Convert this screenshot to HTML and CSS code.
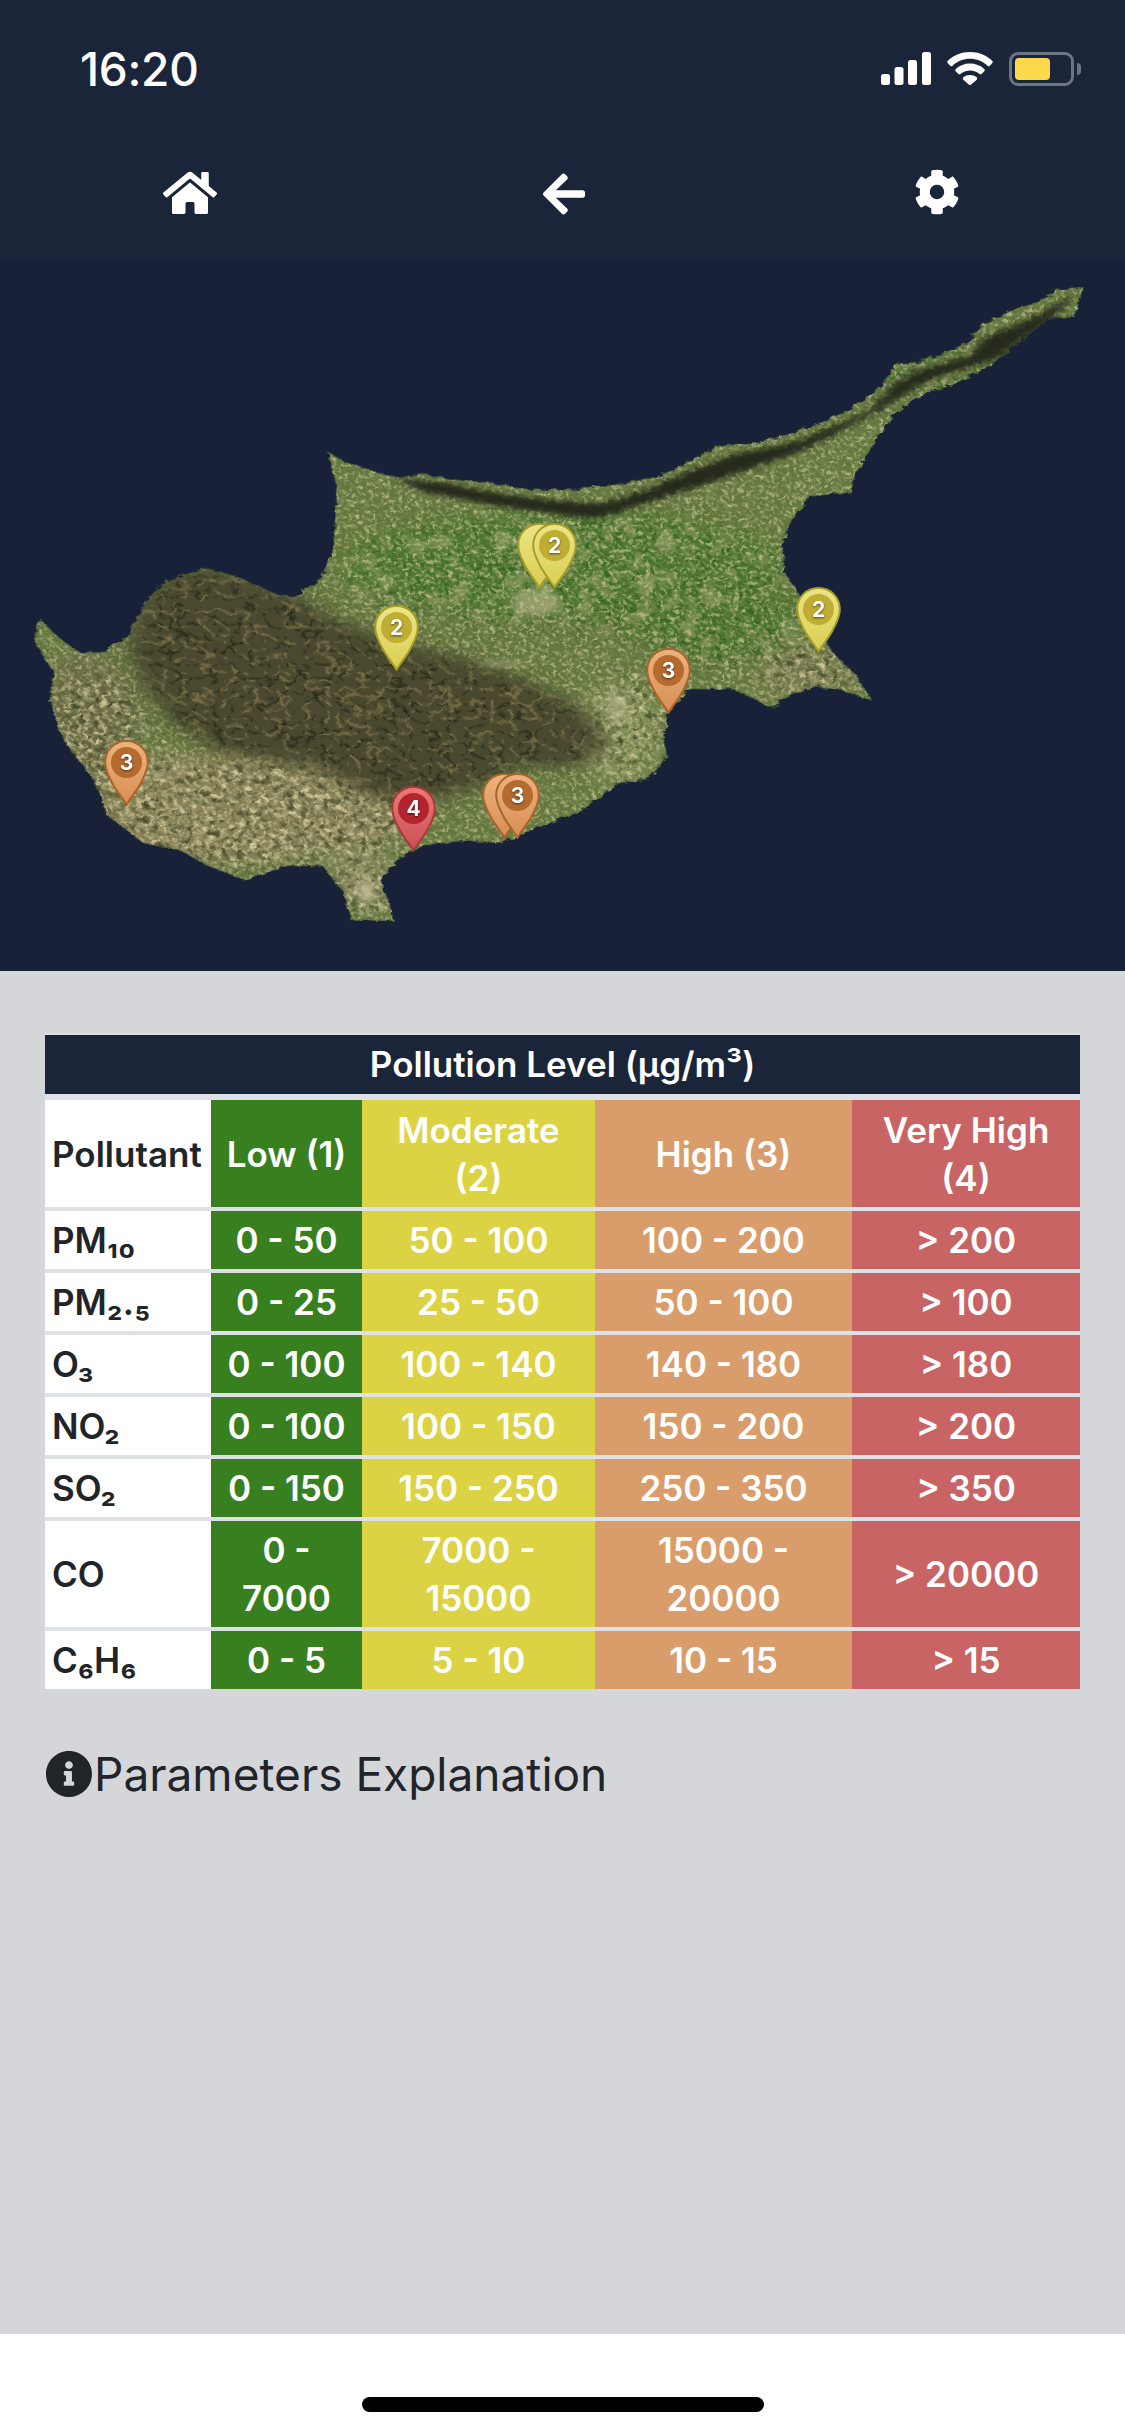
FILE: index.html
```html
<!DOCTYPE html>
<html lang="en">
<head>
<meta charset="utf-8">
<title>Pollution Level</title>
<link rel="stylesheet" href="styles.css">
</head>
<body>
<svg class="defs" width="0" height="0" aria-hidden="true">
  <defs>
    <linearGradient id="gy" x1="0" y1="0" x2="0" y2="1"><stop offset="0" stop-color="#ece586"/><stop offset="1" stop-color="#d8cf52"/></linearGradient>
    <linearGradient id="go" x1="0" y1="0" x2="0" y2="1"><stop offset="0" stop-color="#eeb27c"/><stop offset="1" stop-color="#d68f55"/></linearGradient>
    <linearGradient id="gr" x1="0" y1="0" x2="0" y2="1"><stop offset="0" stop-color="#ea7a78"/><stop offset="1" stop-color="#c94f55"/></linearGradient>
    <path id="pinshape" d="M22.500 1C10.500 1 1.200 10.200 1.200 22.400c0 7.400 3 12.500 6.600 19.800C12 50.600 18.600 58 22.500 64.500 26.400 58 33 50.600 37.200 42.200 40.800 34.900 43.800 29.800 43.800 22.400 43.800 10.200 34.500 1 22.500 1Z"/>
  </defs>
</svg>
<div class="app">
  <header class="top">
    <div class="status">
      <span class="time">16:20</span>
      <div class="status-icons">
        <svg class="signal" viewBox="0 0 50 33"><rect x="0" y="22" width="9" height="11" rx="2.500"/><rect x="13.500" y="15" width="9" height="18" rx="2.500"/><rect x="27" y="8" width="9" height="25" rx="2.500"/><rect x="41" y="0" width="9" height="33" rx="2.500"/></svg>
        <svg class="wifi" viewBox="0 0 46 33"><path d="M23 0C14.500 0 6.700 3.300.8 8.800c-.7.700-.7 1.700 0 2.400l2.400 2.500c.7.700 1.700.7 2.400 0C10.300 9.400 16.400 6.800 23 6.800s12.700 2.600 17.400 6.900c.7.700 1.700.7 2.400 0l2.400-2.500c.7-.7.700-1.700 0-2.400C39.300 3.300 31.500 0 23 0Z"/><path d="M23 11.500c-5.400 0-10.400 2-14.200 5.400-.7.700-.8 1.700-.1 2.400l2.500 2.500c.6.700 1.600.7 2.300.1C16.100 19.800 19.400 18.400 23 18.400s6.900 1.400 9.500 3.500c.7.600 1.700.600 2.300-.1l2.500-2.500c.7-.7.600-1.700-.1-2.400C33.400 13.500 28.400 11.500 23 11.500Z"/><path d="M23 23c-2.500 0-4.800.9-6.600 2.300-.7.600-.8 1.700-.1 2.400l5.500 4.800c.7.700 1.700.7 2.400 0l5.500-4.800c.7-.7.600-1.800-.1-2.400C27.800 23.900 25.500 23 23 23Z"/></svg>
        <div class="battery"><div class="battery-fill"></div></div>
      </div>
    </div>
    <nav class="nav">
      <svg class="ico ico-home" viewBox="0 0 576 512"><path d="M280.370 148.260L96 300.110V464a16 16 0 0 0 16 16l112.060-.29a16 16 0 0 0 15.920-16V368a16 16 0 0 1 16-16h64a16 16 0 0 1 16 16v95.640a16 16 0 0 0 16 16.050L464 480a16 16 0 0 0 16-16V300L295.670 148.260a12.190 12.190 0 0 0-15.300 0zM571.600 251.470L488 182.560V44.050a12 12 0 0 0-12-12h-56a12 12 0 0 0-12 12v72.610L318.470 43a48 48 0 0 0-61 0L4.340 251.470a12 12 0 0 0-1.600 16.900l25.500 31A12 12 0 0 0 45.150 301l235.220-193.740a12.190 12.190 0 0 1 15.300 0L530.900 301a12 12 0 0 0 16.900-1.600l25.500-31a12 12 0 0 0-1.700-16.930z"/></svg>
      <svg class="ico ico-back" viewBox="0 0 448 512"><path d="M257.500 445.100l-22.200 22.200c-9.400 9.400-24.600 9.400-33.900 0L7 273c-9.400-9.400-9.400-24.600 0-33.900L201.400 44.700c9.400-9.400 24.600-9.400 33.900 0l22.200 22.200c9.500 9.500 9.300 25-.4 34.300L136.600 216H424c13.300 0 24 10.700 24 24v32c0 13.300-10.700 24-24 24H136.600l120.500 114.800c9.800 9.300 10 24.800.4 34.300z"/></svg>
      <svg class="ico ico-gear" viewBox="0 0 512 512"><path d="M487.400 315.700l-42.600-24.600c4.300-23.200 4.300-47 0-70.200l42.600-24.600c4.900-2.800 7.100-8.600 5.500-14-11.100-35.600-30-67.800-54.700-94.600-3.800-4.100-10-5.100-14.800-2.300L380.800 110c-17.900-15.400-38.500-27.300-60.800-35.100V25.800c0-5.600-3.900-10.500-9.400-11.700-36.700-8.200-74.300-7.800-109.200 0-5.500 1.200-9.400 6.100-9.400 11.700V75c-22.200 7.900-42.800 19.800-60.800 35.100L88.700 85.500c-4.900-2.800-11-1.900-14.800 2.300-24.700 26.700-43.600 58.900-54.700 94.600-1.700 5.400.6 11.200 5.500 14L67.300 221c-4.300 23.200-4.300 47 0 70.200l-42.600 24.600c-4.900 2.800-7.100 8.600-5.500 14 11.100 35.600 30 67.800 54.700 94.600 3.800 4.100 10 5.100 14.800 2.300l42.600-24.600c17.900 15.400 38.500 27.300 60.800 35.100v49.200c0 5.600 3.900 10.500 9.400 11.700 36.700 8.200 74.300 7.800 109.200 0 5.500-1.200 9.400-6.100 9.400-11.700v-49.200c22.200-7.900 42.800-19.800 60.800-35.100l42.600 24.600c4.900 2.800 11 1.900 14.800-2.300 24.700-26.700 43.600-58.900 54.700-94.600 1.500-5.500-.7-11.300-5.600-14.100zM256 336c-44.100 0-80-35.900-80-80s35.900-80 80-80 80 35.900 80 80-35.900 80-80 80z"/></svg>
    </nav>
    <div class="map">
      <svg class="land" viewBox="0 0 1568 1549" preserveAspectRatio="none">
        <defs>
          <path id="isle" d="M457 418 480 440 520 460 555 475 585 465 625 478 680 485 740 500 800 500 860 490 920 470 960 440 1000 405 1050 400 1110 375 1160 345 1200 310 1230 270 1250 225 1275 225 1310 205 1350 180 1365 145 1410 110 1450 90 1475 65 1510 58 1498 120 1460 130 1410 190 1380 230 1330 270 1290 290 1250 330 1225 380 1195 460 1185 505 1130 515 1105 560 1090 620 1092 680 1115 730 1140 800 1160 855 1190 900 1215 960 1170 935 1130 930 1095 950 1075 978 1050 955 1020 935 960 935 930 985 925 1050 930 1080 905 1130 860 1140 810 1200 760 1230 700 1270 650 1265 590 1275 550 1310 530 1350 550 1440 490 1440 480 1380 450 1320 400 1320 340 1350 290 1320 250 1285 200 1270 150 1210 130 1130 90 1050 70 965 75 900 48 830 55 782 80 820 110 855 145 855 180 815 205 740 230 700 285 672 330 690 380 725 410 735 450 690 465 620 470 500Z"/>
          <path id="troodos" d="M185 850 195 760 230 695 290 672 400 730 480 800 560 840 650 875 730 920 815 990 840 1060 800 1100 720 1095 680 1135 620 1165 520 1165 470 1115 390 1085 310 1065 250 1010 210 935Z"/>
          <clipPath id="isleclip"><use href="#isle"/></clipPath>
          <filter id="edge" x="-5%" y="-5%" width="110%" height="110%" color-interpolation-filters="sRGB">
            <feTurbulence type="fractalNoise" baseFrequency="0.09" numOctaves="3" seed="4" result="n"/>
            <feDisplacementMap in="SourceGraphic" in2="n" scale="10"/>
          </filter>
          <filter id="speckle" x="0" y="0" width="100%" height="100%" color-interpolation-filters="sRGB">
            <feTurbulence type="fractalNoise" baseFrequency="0.2 0.13" numOctaves="3" seed="11"/>
            <feColorMatrix type="matrix" values="0 0 0 0 .80  0 0 0 0 .79  0 0 0 0 .60  3 3 0 0 -2.950"/>
          </filter>
          <filter id="fields" x="0" y="0" width="100%" height="100%" color-interpolation-filters="sRGB">
            <feTurbulence type="fractalNoise" baseFrequency="0.035 0.025" numOctaves="3" seed="57"/>
            <feColorMatrix type="matrix" values="0 0 0 0 .66  0 0 0 0 .66  0 0 0 0 .46  3.500 3.500 0 0 -3.500"/>
          </filter>
          <filter id="bright" x="0" y="0" width="100%" height="100%" color-interpolation-filters="sRGB">
            <feTurbulence type="fractalNoise" baseFrequency="0.12 0.08" numOctaves="4" seed="31"/>
            <feColorMatrix type="matrix" values="0 0 0 0 .88  0 0 0 0 .84  0 0 0 0 .66  2.700 2.700 0 0 -2.750"/>
          </filter>
          <filter id="darks" x="0" y="0" width="100%" height="100%" color-interpolation-filters="sRGB">
            <feTurbulence type="fractalNoise" baseFrequency="0.1 0.07" numOctaves="4" seed="42"/>
            <feColorMatrix type="matrix" values="0 0 0 0 .18  0 0 0 0 .22  0 0 0 0 .10  0 2.700 2.700 0 -2.700"/>
          </filter>
          <filter id="greens" x="0" y="0" width="100%" height="100%" color-interpolation-filters="sRGB">
            <feTurbulence type="fractalNoise" baseFrequency="0.14 0.1" numOctaves="3" seed="23"/>
            <feColorMatrix type="matrix" values="0 0 0 0 .20  0 0 0 0 .38  0 0 0 0 .13  3.500 3.500 0 0 -3.400"/>
          </filter>
          <filter id="ridgelines" x="0" y="0" width="100%" height="100%" color-interpolation-filters="sRGB">
            <feTurbulence type="turbulence" baseFrequency="0.035 0.03" numOctaves="2" seed="7"/>
            <feColorMatrix type="matrix" values="0 0 0 0 .60  0 0 0 0 .53  0 0 0 0 .35  -7 0 0 0 1"/>
          </filter>
          <filter id="ridgedark" x="0" y="0" width="100%" height="100%" color-interpolation-filters="sRGB">
            <feTurbulence type="turbulence" baseFrequency="0.04 0.034" numOctaves="2" seed="19"/>
            <feColorMatrix type="matrix" values="0 0 0 0 .13  0 0 0 0 .14  0 0 0 0 .08  -8 0 0 0 1.100"/>
          </filter>
          <filter id="soft" x="-30%" y="-30%" width="160%" height="160%"><feGaussianBlur stdDeviation="20"/></filter>
          <filter id="feather" x="-30%" y="-30%" width="160%" height="160%"><feGaussianBlur stdDeviation="16"/></filter>
          <filter id="softer" x="-30%" y="-30%" width="160%" height="160%"><feGaussianBlur stdDeviation="6"/></filter>
          <mask id="southmask" maskUnits="userSpaceOnUse" x="0" y="0" width="1568" height="1549">
            <g filter="url(#soft)" fill="#fff">
              <ellipse cx="330" cy="1200" rx="280" ry="120"/>
              <ellipse cx="130" cy="1030" rx="70" ry="130"/>
              <ellipse cx="870" cy="1010" rx="60" ry="110"/>
              <ellipse cx="1130" cy="890" rx="70" ry="60"/>
              <ellipse cx="510" cy="1370" rx="40" ry="70"/>
            </g>
          </mask>
          <mask id="centermask" maskUnits="userSpaceOnUse" x="0" y="0" width="1568" height="1549">
            <g filter="url(#soft)" fill="#fff">
              <ellipse cx="790" cy="680" rx="310" ry="130"/>
              <ellipse cx="1000" cy="800" rx="120" ry="90"/>
              <ellipse cx="1300" cy="240" rx="220" ry="60"/>
            </g>
          </mask>
          <mask id="troodosmask" maskUnits="userSpaceOnUse" x="0" y="0" width="1568" height="1549">
            <use href="#troodos" fill="#fff" filter="url(#feather)"/>
          </mask>
        </defs>
        <g filter="url(#edge)">
          <g clip-path="url(#isleclip)">
            <rect width="1568" height="1549" fill="#63773f"/>
            <g filter="url(#soft)">
              <ellipse cx="330" cy="1190" rx="260" ry="120" fill="#857f54"/>
              <ellipse cx="120" cy="1000" rx="70" ry="150" fill="#6b6b45"/>
              <ellipse cx="860" cy="1030" rx="60" ry="110" fill="#7f8c54"/>
              <ellipse cx="1120" cy="890" rx="70" ry="60" fill="#75784c"/>
              <ellipse cx="510" cy="1350" rx="50" ry="60" fill="#85845a"/>
              <ellipse cx="780" cy="660" rx="300" ry="110" fill="#4f7733"/>
              <ellipse cx="1000" cy="780" rx="120" ry="90" fill="#4f7433"/>
            </g>
            <rect width="1568" height="1549" filter="url(#greens)" mask="url(#centermask)" opacity=".9"/>
            <rect width="1568" height="1549" filter="url(#fields)" mask="url(#centermask)" opacity=".5"/>
            <rect width="1568" height="1549" filter="url(#speckle)" opacity=".75"/>
            <g mask="url(#southmask)">
              <rect width="1568" height="1549" filter="url(#bright)" opacity=".9"/>
              <rect width="1568" height="1549" filter="url(#darks)" opacity=".7"/>
            </g>
            <g filter="url(#soft)"><use href="#troodos" fill="#3f3e28" opacity=".7"/></g>
            <g mask="url(#troodosmask)">
              <rect width="1568" height="1549" fill="#4a4930" opacity=".92"/>
              <rect width="1568" height="1549" filter="url(#ridgedark)" opacity=".9"/>
              <rect width="1568" height="1549" filter="url(#ridgelines)" opacity=".75"/>
            </g>
            <g filter="url(#softer)">
              <path d="M1500 70 1440 125 1370 170 1350 210 1280 240 1250 265 1210 330 1110 395 1020 425 960 460 900 500 840 530 780 525 700 510 620 485 550 475 590 505 700 538 830 565 900 530 1000 480 1120 415 1230 325 1290 265 1390 215 1470 125Z" fill="#282c1a"/>
            </g>
            <g filter="url(#softer)" fill="#c2bc94">
              <ellipse cx="745" cy="745" rx="34" ry="30" opacity=".55"/>
              <ellipse cx="860" cy="975" rx="16" ry="40" opacity=".5"/>
              <ellipse cx="510" cy="1375" rx="11" ry="20" opacity=".95"/>
              <ellipse cx="700" cy="880" rx="40" ry="6" opacity=".45"/>
            </g>
          </g>
        </g>
      </svg>
      <div class="pin pin-y p1"><svg viewBox="0 0 45 66"><use href="#pinshape" fill="url(#gy)" stroke="#a89c28" stroke-width="2"/></svg></div>
      <div class="pin pin-y p2"><svg viewBox="0 0 45 66"><use href="#pinshape" fill="url(#gy)" stroke="#a89c28" stroke-width="2"/><circle cx="22.500" cy="22.500" r="15.500" fill="#bfae33"/><text x="22.500" y="30">2</text></svg></div>
      <div class="pin pin-y p3"><svg viewBox="0 0 45 66"><use href="#pinshape" fill="url(#gy)" stroke="#a89c28" stroke-width="2"/><circle cx="22.500" cy="22.500" r="15.500" fill="#bfae33"/><text x="22.500" y="30">2</text></svg></div>
      <div class="pin pin-y p4"><svg viewBox="0 0 45 66"><use href="#pinshape" fill="url(#gy)" stroke="#a89c28" stroke-width="2"/><circle cx="22.500" cy="22.500" r="15.500" fill="#bfae33"/><text x="22.500" y="30">2</text></svg></div>
      <div class="pin pin-o p5"><svg viewBox="0 0 45 66"><use href="#pinshape" fill="url(#go)" stroke="#a8642c" stroke-width="2"/><circle cx="22.500" cy="22.500" r="15.500" fill="#b56b2e"/><text x="22.500" y="30">3</text></svg></div>
      <div class="pin pin-o p6"><svg viewBox="0 0 45 66"><use href="#pinshape" fill="url(#go)" stroke="#a8642c" stroke-width="2"/><circle cx="22.500" cy="22.500" r="15.500" fill="#b56b2e"/><text x="22.500" y="30">3</text></svg></div>
      <div class="pin pin-o p7"><svg viewBox="0 0 45 66"><use href="#pinshape" fill="url(#go)" stroke="#a8642c" stroke-width="2"/></svg></div>
      <div class="pin pin-o p8"><svg viewBox="0 0 45 66"><use href="#pinshape" fill="url(#go)" stroke="#a8642c" stroke-width="2"/><circle cx="22.500" cy="22.500" r="15.500" fill="#b56b2e"/><text x="22.500" y="30">3</text></svg></div>
      <div class="pin pin-r p9"><svg viewBox="0 0 45 66"><use href="#pinshape" fill="url(#gr)" stroke="#a83a3a" stroke-width="2"/><circle cx="22.500" cy="22.500" r="15.500" fill="#b3242c"/><text x="22.500" y="30">4</text></svg></div>
    </div>
  </header>
  <main class="content">
    <table class="levels">
      <colgroup><col class="c1"><col class="c2"><col class="c3"><col class="c4"><col class="c5"></colgroup>
      <thead>
        <tr class="title"><th colspan="5">Pollution Level (µg/m³)</th></tr>
        <tr class="heads"><th class="name">Pollutant</th><th class="low">Low (1)</th><th class="mod">Moderate (2)</th><th class="high">High (3)</th><th class="vhigh">Very High (4)</th></tr>
      </thead>
      <tbody>
        <tr><td class="name">PM₁₀</td><td class="low">0 - 50</td><td class="mod">50 - 100</td><td class="high">100 - 200</td><td class="vhigh">&gt; 200</td></tr>
        <tr><td class="name">PM₂.₅</td><td class="low">0 - 25</td><td class="mod">25 - 50</td><td class="high">50 - 100</td><td class="vhigh">&gt; 100</td></tr>
        <tr><td class="name">O₃</td><td class="low">0 - 100</td><td class="mod">100 - 140</td><td class="high">140 - 180</td><td class="vhigh">&gt; 180</td></tr>
        <tr><td class="name">NO₂</td><td class="low">0 - 100</td><td class="mod">100 - 150</td><td class="high">150 - 200</td><td class="vhigh">&gt; 200</td></tr>
        <tr><td class="name">SO₂</td><td class="low">0 - 150</td><td class="mod">150 - 250</td><td class="high">250 - 350</td><td class="vhigh">&gt; 350</td></tr>
        <tr><td class="name">CO</td><td class="low">0 - 7000</td><td class="mod">7000 - 15000</td><td class="high">15000 - 20000</td><td class="vhigh">&gt; 20000</td></tr>
        <tr><td class="name">C₆H₆</td><td class="low">0 - 5</td><td class="mod">5 - 10</td><td class="high">10 - 15</td><td class="vhigh">&gt; 15</td></tr>
      </tbody>
    </table>
    <div class="explain">
      <svg class="info" viewBox="8 8 496 496"><path d="M256 8C119.043 8 8 119.083 8 256c0 136.997 111.043 248 248 248s248-111.003 248-248C504 119.083 392.957 8 256 8zm0 110c23.196 0 42 18.804 42 42s-18.804 42-42 42-42-18.804-42-42 18.804-42 42-42zm56 254c0 6.627-5.373 12-12 12h-88c-6.627 0-12-5.373-12-12v-24c0-6.627 5.373-12 12-12h12v-64h-12c-6.627 0-12-5.373-12-12v-24c0-6.627 5.373-12 12-12h64c6.627 0 12 5.373 12 12v100h12c6.627 0 12 5.373 12 12v24z"/></svg>
      <span>Parameters Explanation</span>
    </div>
  </main>
  <footer class="bottom"><div class="indicator"></div></footer>
</div>
</body>
</html>
```
FILE: styles.css
```css
* { box-sizing: border-box; }
html, body { margin: 0; padding: 0; }
body { width: 1125px; height: 2436px; overflow: hidden; font-family: Inter, "Noto Sans", sans-serif; background: #d5d6da; color: #212529; }
.defs { position: absolute; }
.app { display: flex; flex-direction: column; height: 2436px; }

.top { background: #1b2539; height: 971px; display: flex; flex-direction: column; flex: none; }
.status { height: 132px; display: flex; justify-content: space-between; align-items: flex-start; padding: 45px 44px 0 80px; }
.time { color: #fff; font-size: 46px; font-weight: 500; line-height: 48px; letter-spacing: -0.3px; }
.status-icons { display: flex; align-items: flex-start; gap: 16px; padding-top: 7px; }
.signal { width: 50px; height: 33px; fill: #fff; }
.wifi { width: 46px; height: 33px; fill: #fff; }
.battery { position: relative; width: 65px; height: 34px; margin-right: 7px; border: 3px solid #6d7380; border-radius: 9px; padding: 3px; }
.battery::after { content: ""; position: absolute; left: 65px; top: 8px; width: 4px; height: 12px; background: #6d7380; border-radius: 0 4px 4px 0; }
.battery-fill { width: 35px; height: 22px; background: #fcd94a; border-radius: 4px; }

.nav { height: 128px; padding: 37px 165px 0 163px; display: flex; justify-content: space-between; align-items: flex-start; }
.ico { fill: #fff; display: block; }
.ico-home { width: 54px; height: 48px; }
.ico-back { width: 42px; height: 48px; margin-top: 1px; margin-right: 3px; }
.ico-gear { width: 46px; height: 46px; }

.map { position: relative; flex: 1; background: #182138; overflow: hidden; }
.land { display: block; width: 1125px; height: 711px; }
.pin { position: absolute; width: 45px; height: 66px; }
.pin svg { display: block; width: 45px; height: 66px; overflow: visible; }
.pin text { fill: #fff; font-family: Inter, sans-serif; font-size: 21px; font-weight: 700; text-anchor: middle; filter: drop-shadow(0 1px 1px rgba(0, 0, 0, .55)); }
.p1 { left: 517px; top: 263px; }
.p2 { left: 532px; top: 263px; }
.p3 { left: 374px; top: 345px; }
.p4 { left: 796px; top: 327px; }
.p5 { left: 646px; top: 388px; }
.p6 { left: 104px; top: 480px; }
.p7 { left: 482px; top: 513px; }
.p8 { left: 495px; top: 513px; }
.p9 { left: 391px; top: 526px; }

.content { flex: 1; padding: 62px 45px 0; }
.levels { width: 1035px; table-layout: fixed; border-collapse: collapse; font-size: 35px; line-height: 48px; font-weight: 600; color: #fff; text-align: center; }
.c1 { width: 166px; }
.c2 { width: 151px; }
.c3 { width: 233px; }
.c4 { width: 257px; }
.c5 { width: 228px; }
.levels th, .levels td { padding: 5px 12px; border-top: 4px solid #dee2e6; font-weight: 600; vertical-align: middle; }
.levels .title th { background: #1b2539; border-top: 2px solid #dee2e6; border-bottom: 6px solid #dee2e6; line-height: 49px; }
.levels .heads th { padding-top: 5.500px; padding-bottom: 5.500px; border-top: 0; }
.levels .name { background: #fff; color: #212529; text-align: left; padding-left: 7px; padding-right: 0; }
.low { background: #38801f; }
.mod { background: #dbd344; }
.high { background: #d89d6b; }
.vhigh { background: #c96464; }

.explain { display: flex; align-items: center; margin-top: 58px; font-size: 46px; line-height: 54px; font-weight: 400; color: #212529; }
.info { width: 46px; height: 46px; fill: #212529; margin: 0 2px 0 1px; flex: none; }

.bottom { height: 102px; flex: none; background: #fff; display: flex; justify-content: center; align-items: flex-start; padding-top: 63px; }
.indicator { width: 402px; height: 15px; background: #000; border-radius: 8px; }
```
